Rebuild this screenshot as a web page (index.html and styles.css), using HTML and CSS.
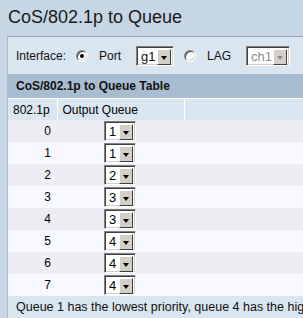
FILE: index.html
```html
<!doctype html>
<html>
<head>
<meta charset="utf-8">
<link rel="stylesheet" href="styles.css">
<title>CoS/802.1p to Queue</title>
</head>
<body>
<h1 class="title">CoS/802.1p to Queue</h1>

<div class="panel">
<div class="iface">
    <span class="lbl">Interface:</span>
    <span class="radio on"></span>
    <span class="opt">Port</span>
    <span class="sel sel-port"><span class="val">g1</span><span class="btn"></span></span>
    <span class="radio"></span>
    <span class="opt">LAG</span>
    <span class="sel sel-lag off"><span class="val">ch1</span><span class="btn"></span></span>
</div>

<div class="bar">CoS/802.1p to Queue Table</div>

<table class="map">
<tr class="head">
    <th class="c1">802.1p</th>
    <th class="c2">Output Queue</th>
    <th class="c3"></th>
</tr>
<tr class="even"><td class="c1">0</td><td class="c2"><span class="sel"><span class="val">1</span><span class="btn"></span></span></td><td></td></tr>
<tr class="odd"><td class="c1">1</td><td class="c2"><span class="sel"><span class="val">1</span><span class="btn"></span></span></td><td></td></tr>
<tr class="even"><td class="c1">2</td><td class="c2"><span class="sel"><span class="val">2</span><span class="btn"></span></span></td><td></td></tr>
<tr class="odd"><td class="c1">3</td><td class="c2"><span class="sel"><span class="val">3</span><span class="btn"></span></span></td><td></td></tr>
<tr class="even"><td class="c1">4</td><td class="c2"><span class="sel"><span class="val">3</span><span class="btn"></span></span></td><td></td></tr>
<tr class="odd"><td class="c1">5</td><td class="c2"><span class="sel"><span class="val">4</span><span class="btn"></span></span></td><td></td></tr>
<tr class="even"><td class="c1">6</td><td class="c2"><span class="sel"><span class="val">4</span><span class="btn"></span></span></td><td></td></tr>
<tr class="odd"><td class="c1">7</td><td class="c2"><span class="sel"><span class="val">4</span><span class="btn"></span></span></td><td></td></tr>
</table>

<p class="note">Queue 1 has the lowest priority, queue 4 has the highest priority.</p>
</div>
</body>
</html>
```

FILE: styles.css
```css
body {
    margin: 0;
    background: #c6d6e4;
    font-family: "Liberation Sans", Arial, sans-serif;
    font-size: 12px;
    color: #000;
    overflow: hidden;
}
.title {
    margin: 0;
    height: 36px;
    padding: 0 0 0 8px;
    font-size: 18px;
    font-weight: normal;
    line-height: 34px;
    color: #1a1a1a;
}
.panel {
    margin-left: 7px;
    background: #dae6ef;
    border-top: 1px solid #96a8b8;
    border-left: 1px solid #a9bccc;
    white-space: nowrap;
    overflow: hidden;
}
.iface {
    height: 37px;
    display: flex;
    align-items: center;
    padding-left: 8px;
    color: #111;
}
.lbl {
    margin-right: 10px;
}
.opt {
    margin-left: 11px;
}
.radio {
    width: 12px;
    height: 12px;
    border-radius: 50%;
    box-sizing: border-box;
    background: #fff;
    border: 1px solid;
    border-color: #808080 #fff #fff #808080;
    box-shadow: inset 1px 1px 0 #404040, inset -1px -1px 0 #d4d0c8;
    position: relative;
}
.radio.on::after {
    content: "";
    position: absolute;
    left: 3px;
    top: 3px;
    width: 4px;
    height: 4px;
    border-radius: 50%;
    background: #000;
}
.sel {
    display: inline-flex;
    box-sizing: border-box;
    height: 20px;
    background: #fff;
    border: 1px solid;
    border-color: #808080 #fff #fff #808080;
    box-shadow: inset 1px 1px 0 #404040, inset -1px -1px 0 #d4d0c8;
    padding: 2px;
    font-size: 13px;
    line-height: 16px;
}
.sel .val {
    flex: 1;
    padding-left: 2px;
}
.sel .btn {
    width: 14px;
    height: 16px;
    box-sizing: border-box;
    background: #d4d0c8;
    border: 1px solid;
    border-color: #fff #404040 #404040 #fff;
    position: relative;
}
.sel .btn::after {
    content: "";
    position: absolute;
    left: 3px;
    top: 6px;
    border-left: 3px solid transparent;
    border-right: 3px solid transparent;
    border-top: 4px solid #000;
}
.sel-port {
    width: 38px;
    margin-left: 15px;
    margin-right: 10px;
}
.sel-lag {
    width: 44px;
    margin-left: 15px;
}
.sel.off {
    color: #8c8c8c;
}
.sel.off .btn::after {
    border-top-color: #8c8c8c;
}
.bar {
    height: 24px;
    line-height: 24px;
    background: #a8bdd0;
    font-weight: bold;
    padding-left: 8px;
    color: #111;
}
.map {
    width: 100%;
    border-collapse: collapse;
}
.map th,
.map td {
    padding: 0;
    height: 22px;
    font-weight: normal;
}
.map .head th {
    height: 21px;
    background: #dae6ef;
    border-top: 1px solid #fff;
    border-right: 1px solid #fff;
    text-align: left;
    padding-left: 5px;
}
.map .head th.c3 {
    border-right: none;
}
.map .c1 {
    width: 43px;
}
.map .c2 {
    width: 80px;
}
.map td.c1 {
    text-align: right;
    padding-right: 6px;
}
.map td.c2 {
    padding-left: 47px;
}
.map td .sel {
    width: 32px;
    vertical-align: middle;
}
.even td {
    background: #ededf3;
}
.odd td {
    background: #f7f8fe;
}
.note {
    margin: 0;
    height: 22px;
    line-height: 22px;
    padding-left: 8px;
    font-size: 12.5px;
    color: #111;
}
```
